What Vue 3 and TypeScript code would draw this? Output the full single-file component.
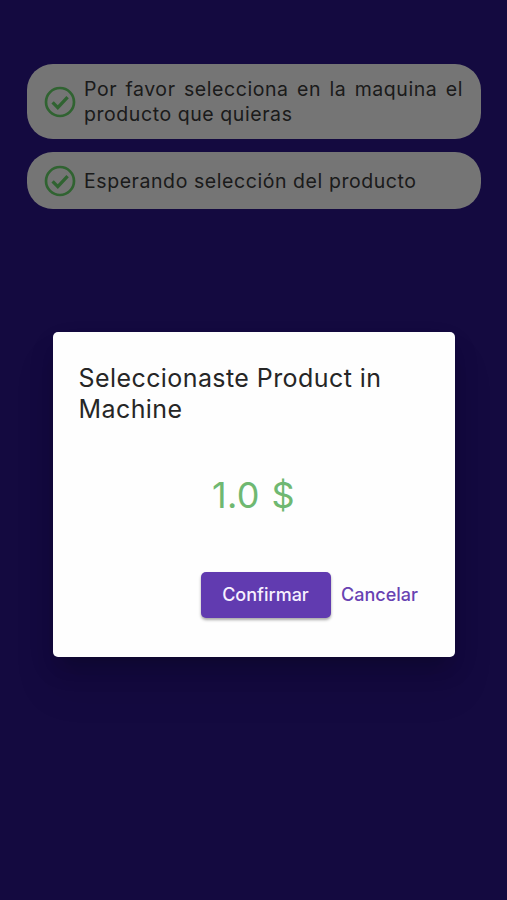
<script setup lang="ts">
interface Step {
  id: number
  text: string
}

const steps: Step[] = [
  { id: 1, text: 'Por favor selecciona en la maquina el producto que quieras' },
  { id: 2, text: 'Esperando selección del producto' },
]
const price = '1.0 $'
</script>

<template>
  <div class="screen">
    <main class="steps">
      <div v-for="step in steps" :key="step.id" class="step">
        <svg class="check" viewBox="0 0 32 32" aria-hidden="true">
          <circle cx="16" cy="16" r="14" />
          <path d="M8.6 16.4l5.2 5.2L23.6 11.2" />
        </svg>
        <p class="step-text">{{ step.text }}</p>
      </div>
    </main>
    <div class="backdrop">
      <section class="dialog" role="dialog">
        <h1 class="title">Seleccionaste Product in Machine</h1>
        <p class="price">{{ price }}</p>
        <div class="actions">
          <button class="btn confirm">Confirmar</button>
          <button class="btn cancel">Cancelar</button>
        </div>
      </section>
    </div>
  </div>
</template>

<style>
body {
  background: #140a3f;
}
</style>

<style scoped>
.screen {
  position: relative;
  height: 900px;
  box-sizing: border-box;
  padding: 64px 26px 0 27px;
  background: #2c168c;
  font-family: Inter, 'Liberation Sans', sans-serif;
  overflow: hidden;
}
.steps {
  display: flex;
  flex-direction: column;
  gap: 13px;
}
.step {
  display: flex;
  align-items: center;
  box-sizing: border-box;
  min-height: 57px;
  padding: 13px 18px 12px 17px;
  border-radius: 26px;
  background: #fff;
}
.check {
  flex: none;
  width: 32px;
  height: 32px;
  margin-right: 8px;
  fill: none;
  stroke: #6ad86c;
  stroke-width: 2.7;
}
.check path {
  stroke-width: 3.4;
}
.step-text {
  flex: 1;
  margin: 0;
  font-size: 19.5px;
  line-height: 25px;
  letter-spacing: 0.57px;
  text-align: justify;
  color: #3c3c3c;
}
.backdrop {
  position: absolute;
  inset: 0;
  display: flex;
  align-items: flex-start;
  justify-content: center;
  padding-top: 332px;
  box-sizing: border-box;
  background: rgba(0, 0, 0, 0.54);
}
.dialog {
  width: 402px;
  height: 325px;
  box-sizing: border-box;
  padding: 31px 26px 39px;
  display: flex;
  flex-direction: column;
  border-radius: 5px;
  background: #fefefe;
  box-shadow: 0 14px 19px -9px rgba(0, 0, 0, 0.2), 0 31px 40px 4px rgba(0, 0, 0, 0.07),
    0 12px 30px 2px rgba(0, 0, 0, 0.05);
}
.title {
  margin: 0;
  font-size: 25px;
  line-height: 31px;
  font-weight: 400;
  letter-spacing: 0.42px;
  color: #262626;
}
.price {
  margin: 48px 0 0;
  font-size: 36px;
  line-height: 44px;
  letter-spacing: 0.4px;
  word-spacing: 1px;
  text-align: center;
  color: #6fb871;
}
.actions {
  display: flex;
  justify-content: flex-end;
  margin-top: auto;
}
.btn {
  height: 46px;
  padding: 0 10px;
  border: 0;
  border-radius: 5px;
  background: none;
  font: 500 18px/46px Inter, 'Liberation Sans', sans-serif;
  white-space: nowrap;
}
.confirm {
  width: 130px;
  background: #613bb0;
  color: #f6f0ff;
  box-shadow: 0 2px 3px rgba(0, 0, 0, 0.35);
}
.cancel {
  width: 98px;
  color: #6842b2;
}
</style>
